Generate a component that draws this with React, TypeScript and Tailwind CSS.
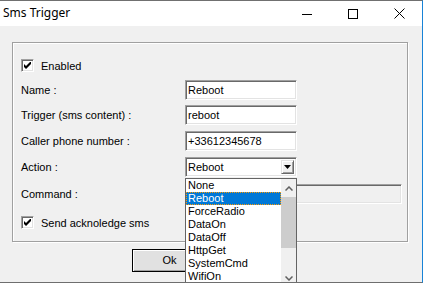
import React from "react";

function Input({ value, w = 112 }: { value: string; w?: number }) {
  return (
    <div
      className="h-[20px] bg-white border border-t-[#a0a0a0] border-l-[#a0a0a0] border-r-[#ffffff] border-b-[#ffffff] shadow-[inset_1px_1px_0_#696969,inset_-1px_-1px_0_#e3e3e3] flex items-center pl-[2px] text-[11px] leading-none"
      style={{ width: w }}
    >
      {value}
    </div>
  );
}

function Check() {
  return (
    <div className="w-[13px] h-[13px] bg-white border border-t-[#a0a0a0] border-l-[#a0a0a0] border-r-[#ffffff] border-b-[#ffffff] shadow-[inset_1px_1px_0_#696969,inset_-1px_-1px_0_#e3e3e3] flex items-center justify-center">
      <svg width="7" height="7" viewBox="0 0 7 7">
        <path d="M0 2 L0 5 L2 7 L7 2 L7 -1 L2 4 Z" fill="#000" />
      </svg>
    </div>
  );
}

function Row({ label, children, mt }: { label: string; children: React.ReactNode; mt: string }) {
  return (
    <div className={`flex items-center ${mt}`}>
      <div className="w-[164px] leading-none">{label}</div>
      {children}
    </div>
  );
}

const items = ["None", "Reboot", "ForceRadio", "DataOn", "DataOff", "HttpGet", "SystemCmd", "WifiOn"];

export default function App() {
  return (
    <div className="relative w-[423px] h-[283px] overflow-hidden bg-[#f0f0f0] border-t border-t-[#707070] border-r border-r-[#1883d7] border-b border-b-[#6e6e6e] font-['Liberation_Sans',Arial,sans-serif] text-[11px] text-black">
      {/* title bar */}
      <div className="h-[25px] bg-white flex items-center">
        <div className="pl-[3px] font-['Noto_Sans',sans-serif] text-[12px] leading-none pb-[1px]">Sms Trigger</div>
        <div className="ml-auto flex h-full">
          <div className="w-[46px] h-full flex items-center justify-center">
            <svg width="10" height="10" viewBox="0 0 10 10">
              <path d="M0 5.5 H10" stroke="#000" strokeWidth="1" />
            </svg>
          </div>
          <div className="w-[46px] h-full flex items-center justify-center">
            <svg width="10" height="10" viewBox="0 0 10 10">
              <rect x="0.5" y="0.5" width="9" height="9" fill="none" stroke="#000" strokeWidth="1" />
            </svg>
          </div>
          <div className="w-[46px] h-full flex items-center justify-center">
            <svg width="11" height="11" viewBox="0 0 11 11">
              <path d="M0.5 0.5 L10.5 10.5 M10.5 0.5 L0.5 10.5" stroke="#000" strokeWidth="1" />
            </svg>
          </div>
        </div>
      </div>

      {/* body */}
      <div className="pl-[12px] pt-[16px]">
        <div className="w-[396px] h-[200px] border border-[#a0a0a0] shadow-[1px_1px_0_#ffffff,inset_1px_1px_0_#ffffff] pl-[8px] flex flex-col">
          <div className="flex items-center mt-[16px] h-[13px]">
            <Check />
            <span className="ml-[7px] leading-none pt-[1px]">Enabled</span>
          </div>
          <Row label="Name :" mt="mt-[8px]">
            <Input value="Reboot" />
          </Row>
          <Row label="Trigger (sms content) :" mt="mt-[5px]">
            <Input value="reboot" />
          </Row>
          <Row label="Caller phone number :" mt="mt-[6px]">
            <Input value="+33612345678" />
          </Row>
          <Row label="Action :" mt="mt-[6px]">
            <div className="w-[112px] h-[20px] bg-white border border-t-[#a0a0a0] border-l-[#a0a0a0] border-r-[#ffffff] border-b-[#ffffff] shadow-[inset_1px_1px_0_#696969,inset_-1px_-1px_0_#e3e3e3] flex items-center pl-[2px] pr-[2px]">
              <span className="leading-none">Reboot</span>
              <div className="ml-auto w-[13px] h-[14px] bg-[#f0f0f0] border border-t-[#e3e3e3] border-l-[#e3e3e3] border-r-[#696969] border-b-[#696969] shadow-[inset_1px_1px_0_#ffffff,inset_-1px_-1px_0_#a0a0a0] flex items-center justify-center">
                <svg width="7" height="4" viewBox="0 0 7 4">
                  <path d="M0 0 H7 L3.5 4 Z" fill="#000" />
                </svg>
              </div>
            </div>
          </Row>
          <Row label="Command :" mt="mt-[7px]">
            <div className="w-[217px] h-[20px] bg-[#f0f0f0] border border-t-[#a0a0a0] border-l-[#a0a0a0] border-r-[#ffffff] border-b-[#ffffff] shadow-[inset_1px_1px_0_#696969,inset_-1px_-1px_0_#e3e3e3]" />
          </Row>
          <div className="flex items-center mt-[12px] h-[13px]">
            <Check />
            <span className="ml-[7px] leading-none pt-[1px]">Send acknoledge sms</span>
          </div>
        </div>
        <div className="ml-[120px] mt-[7px] w-[75px] h-[23px] border border-black bg-[#e1e1e1] shadow-[inset_1px_1px_0_#ffffff,inset_-1px_-1px_0_#a0a0a0] flex items-center justify-center leading-none">
          Ok
        </div>
      </div>

      {/* dropdown list */}
      <div className="absolute left-[185px] top-[177px] w-[112px] h-[120px] bg-white border border-[#646464] flex">
        <div className="w-[95px] flex flex-col">
          {items.map((it) =>
            it === "Reboot" ? (
              <div key={it} className="h-[13px] bg-[#0078d7] text-white border border-dotted border-[#ff9a00] flex items-center pl-[1px] leading-none">
                {it}
              </div>
            ) : (
              <div key={it} className="h-[13px] flex items-center pl-[2px] leading-none">
                {it}
              </div>
            )
          )}
        </div>
        <div className="w-[15px] h-[107px] bg-[#f0f0f0] flex flex-col items-center">
          <div className="h-[18px] w-full flex items-center justify-center">
            <svg width="8" height="5" viewBox="0 0 8 5">
              <path d="M0.5 4.5 L4 1 L7.5 4.5" fill="none" stroke="#606060" strokeWidth="1.5" />
            </svg>
          </div>
          <div className="w-full h-[51px] bg-[#cdcdcd]" />
          <div className="mt-auto h-[16px] w-full flex items-center justify-center">
            <svg width="8" height="5" viewBox="0 0 8 5">
              <path d="M0.5 0.5 L4 4 L7.5 0.5" fill="none" stroke="#606060" strokeWidth="1.5" />
            </svg>
          </div>
        </div>
      </div>
    </div>
  );
}
